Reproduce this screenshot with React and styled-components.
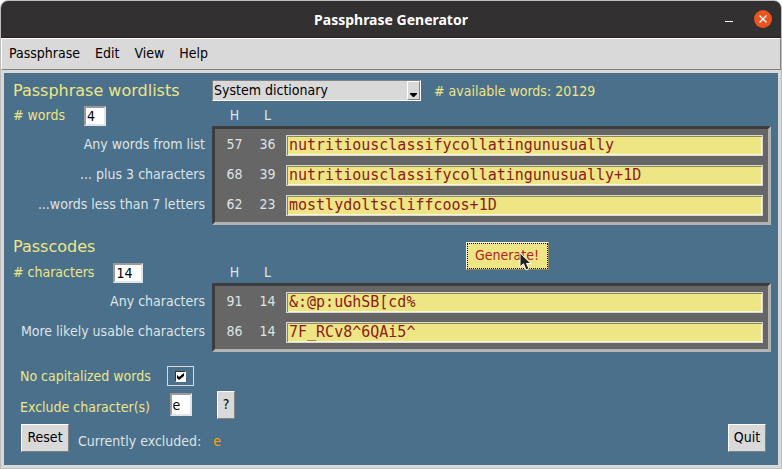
import React from "react";
import styled, { createGlobalStyle } from "styled-components";

const blue = "#4a708b";
const grey = "#d9d9d9";
const khaki = "#eee685";
const maroon = "#8b1a1a";

const GlobalStyle = createGlobalStyle`
  * { box-sizing: border-box; }
  body {
    margin: 0;
    background: #fff;
    font: 14px/20px "DejaVu Sans Condensed", "DejaVu Sans", sans-serif;
  }
  button, input, select { font: inherit; margin: 0; border-radius: 0; }
`;

const Window = styled.div`
  display: flex;
  flex-direction: column;
  min-height: 100vh;
  border: 1px solid #bdbdbb;
  border-radius: 8px 8px 0 0;
  background: ${grey};
  overflow: hidden;
`;

const TitleBar = styled.header`
  display: grid;
  grid-template-columns: 1fr auto 1fr;
  align-items: center;
  height: 37px;
  padding: 0 9px;
  background: #323030;
  border-bottom: 1px solid #222;
  color: #fff;
`;

const Title = styled.h1`
  grid-column: 2;
  margin: 0;
  padding-top: 2px;
  font: bold 14px/20px "Noto Sans", sans-serif;
`;

const WindowButtons = styled.div`
  display: flex;
  justify-content: flex-end;
  align-items: center;
  gap: 16px;
`;

const WindowButton = styled.button`
  display: flex;
  padding: 0;
  border: 0;
  background: none;
`;

const MenuBar = styled.nav`
  display: flex;
  align-items: center;
  gap: 15px;
  height: 32px;
  padding: 0 7px 2px;
  border: 1px solid;
  border-color: #fff #828282 #828282 #fff;
`;

const MenuItem = styled.button`
  padding: 0;
  border: 0;
  background: none;
  color: #000;
`;

const Body = styled.main`
  flex: 1;
  margin: 3px;
  padding-top: 7px;
  background: ${blue};
  color: #dfe3e5;
`;

const Section = styled.section`
  display: grid;
  grid-template-columns: 208px 1fr;
  padding-right: 7px;
`;

const Heading = styled.h2`
  margin: 0;
  padding-left: 9px;
  font: 16px/21px "DejaVu Sans", sans-serif;
  color: ${khaki};
`;

const SourceRow = styled.div`
  display: flex;
  align-items: center;
  gap: 13px;
  height: 21px;
`;

const SelectBox = styled.div`
  position: relative;
  width: 209px;
`;

const Select = styled.select`
  display: block;
  appearance: none;
  width: 100%;
  height: 21px;
  padding: 0 16px 0 1px;
  border: 1px solid;
  border-color: #828282 #fff #fff #828282;
  background: ${grey};
  color: #000;
  line-height: 17px;
`;

const SelectArrow = styled.span`
  position: absolute;
  top: 1px;
  right: 1px;
  display: flex;
  justify-content: center;
  align-items: flex-end;
  width: 13px;
  height: 19px;
  padding-bottom: 2px;
  border: 1px solid;
  border-color: #fff #828282 #828282 #fff;
  pointer-events: none;
`;

const Note = styled.span`
  color: ${khaki};
`;

const CountRow = styled.div`
  display: flex;
  align-items: flex-end;
  gap: 19px;
  height: 25px;
  padding-left: 9px;
`;

const OptionLabel = styled.label`
  padding-bottom: 1px;
  color: ${khaki};
`;

const CountInput = styled.input`
  width: ${(p) => p.$width}px;
  height: ${(p) => p.$height || 20}px;
  padding: 0 1px;
  border: 2px solid;
  border-color: #9a9a9a #e4e4e4 #e4e4e4 #9a9a9a;
  background: #fff;
  color: #000;
`;

const ColumnHeads = styled.div`
  display: grid;
  grid-template-columns: 33px 33px;
  align-self: end;
  padding: 0 0 1px 6px;
  text-align: center;
`;

const PasscodeTitle = styled.div`
  display: flex;
  flex-direction: column;
  justify-content: flex-end;
  gap: 1px;
`;

const PasscodeTools = styled.div`
  display: flex;
  align-items: flex-end;
  height: 58px;
`;

const GenerateButton = styled.button`
  position: relative;
  align-self: flex-start;
  width: 83px;
  height: 28px;
  margin: 17px 0 0 182px;
  padding: 0 1px 2px 0;
  border: 1px solid;
  border-color: #fbf8d0 #8f8a50 #8f8a50 #fbf8d0;
  outline: 1px dotted #000;
  outline-offset: -2px;
  background: ${khaki};
  color: #b22222;
`;

const Pointer = styled.svg`
  position: absolute;
  left: 52px;
  top: 9px;
`;

const Names = styled.div`
  display: flex;
  flex-direction: column;
  gap: 9px;
  padding: 8px 7px 0 0;
  text-align: right;
  line-height: 21px;
`;

const Panel = styled.div`
  display: grid;
  gap: 9px;
  padding: 6px 5px 6px 3px;
  border: 3px solid;
  border-color: #3d3d3d #b3b3b3 #b3b3b3 #3d3d3d;
  background: #666;
`;

const ResultRow = styled.div`
  display: grid;
  grid-template-columns: 33px 33px 1fr;
  height: 21px;
  line-height: 19px;
  text-align: center;
`;

const ResultInput = styled.input`
  min-width: 0;
  height: 21px;
  margin-left: 2px;
  padding: 0 2px 1px;
  border: 1px solid ${grey};
  box-shadow: inset 1px 1px #8f8a50, inset -1px -1px #fbf8d0;
  background: ${khaki};
  color: ${maroon};
  font: 15px/18px "DejaVu Sans Mono", monospace;
`;

const Options = styled.div`
  display: grid;
  grid-template-columns: 147px 27px auto;
  grid-template-rows: 20px 28px;
  row-gap: 5px;
  align-items: center;
  justify-content: start;
  padding: 14px 12px 5px 16px;
`;

const CheckFrame = styled.span`
  position: relative;
  grid-column: 2;
  display: flex;
  align-items: center;
  justify-content: center;
  height: 20px;
  border: 1px solid ${grey};
`;

const CheckBox = styled.input`
  appearance: none;
  width: 11px;
  height: 11px;
  border: 1px solid;
  border-color: #333 #fff #fff #333;
  background: #fff;
`;

const CheckMark = styled.svg`
  position: absolute;
  pointer-events: none;
`;

const ExcludeLabel = styled(OptionLabel)`
  grid-column: 1;
  padding: 4px 0 0;
`;

const ExcludeCell = styled.span`
  display: flex;
  align-self: start;
  justify-content: center;
  padding-top: 2px;
`;

const Button = styled.button`
  width: ${(p) => p.$width}px;
  height: 28px;
  padding: 0 0 2px;
  border: 1px solid;
  border-color: #fff #828282 #828282 #fff;
  background: ${grey};
  color: #000;
`;

const HelpCell = styled.span`
  display: flex;
  padding-left: 23px;
`;

const Footer = styled.footer`
  display: flex;
  align-items: center;
  gap: 9px;
  padding: 0 12px 12px 17px;
`;

const Excluded = styled.span`
  flex: 1;
  padding-top: 6px;
`;

const ExcludedValue = styled.output`
  margin-left: 8px;
  color: #ffa500;
`;

const words = [
  { id: "any-words", name: "Any words from list", h: 57, l: 36, value: "nutritiousclassifycollatingunusually" },
  { id: "plus-three", name: "... plus 3 characters", h: 68, l: 39, value: "nutritiousclassifycollatingunusually+1D" },
  { id: "short-words", name: "...words less than 7 letters", h: 62, l: 23, value: "mostlydoltscliffcoos+1D" },
];

const codes = [
  { id: "any-chars", name: "Any characters", h: 91, l: 14, value: "&:@p:uGhSB[cd%" },
  { id: "usable-chars", name: "More likely usable characters", h: 86, l: 14, value: "7F_RCv8^6QAi5^" },
];

function Heads() {
  return (
    <ColumnHeads>
      <span>H</span>
      <span>L</span>
    </ColumnHeads>
  );
}

function Results({ rows }) {
  return (
    <>
      <Names>
        {rows.map((r) => (
          <label key={r.id} htmlFor={r.id}>{r.name}</label>
        ))}
      </Names>
      <Panel>
        {rows.map((r) => (
          <ResultRow key={r.id}>
            <span>{r.h}</span>
            <span>{r.l}</span>
            <ResultInput id={r.id} defaultValue={r.value} spellCheck={false} />
          </ResultRow>
        ))}
      </Panel>
    </>
  );
}

export default function App() {
  return (
    <>
      <GlobalStyle />
      <Window>
        <TitleBar>
          <Title>Passphrase Generator</Title>
          <WindowButtons>
            <WindowButton aria-label="Minimize">
              <svg width="18" height="18" viewBox="0 0 18 18">
                <path d="M5 11.5h8" stroke="#fff" />
              </svg>
            </WindowButton>
            <WindowButton aria-label="Close">
              <svg width="18" height="18" viewBox="0 0 18 18">
                <circle cx="9" cy="9" r="9" fill="#e95420" />
                <path d="M5.5 5.5l7 7M12.5 5.5l-7 7" stroke="#fff" strokeWidth="1.3" />
              </svg>
            </WindowButton>
          </WindowButtons>
        </TitleBar>
        <MenuBar>
          {["Passphrase", "Edit", "View", "Help"].map((m) => (
            <MenuItem key={m}>{m}</MenuItem>
          ))}
        </MenuBar>
        <Body>
          <Section>
            <Heading>Passphrase wordlists</Heading>
            <SourceRow>
              <SelectBox>
                <Select aria-label="Wordlist">
                  <option>System dictionary</option>
                </Select>
                <SelectArrow>
                  <svg width="7" height="4" viewBox="0 0 7 4">
                    <path d="M0 0h7v1L4 4H3L0 1z" fill="#000" />
                  </svg>
                </SelectArrow>
              </SelectBox>
              <Note># available words: 20129</Note>
            </SourceRow>
            <CountRow>
              <OptionLabel htmlFor="num-words"># words</OptionLabel>
              <CountInput id="num-words" $width={22} defaultValue="4" />
            </CountRow>
            <Heads />
            <Results rows={words} />
          </Section>
          <Section>
            <PasscodeTitle>
              <Heading>Passcodes</Heading>
              <CountRow>
                <OptionLabel htmlFor="num-chars"># characters</OptionLabel>
                <CountInput id="num-chars" $width={30} defaultValue="14" />
              </CountRow>
            </PasscodeTitle>
            <PasscodeTools>
              <Heads />
              <GenerateButton>
                Generate!
                <Pointer width="14" height="20" viewBox="0 0 14 20">
                  <path
                    d="M1 1v14l3.500-3.200L7 18l3-1.300-2.500-5.200H12z"
                    fill="#222"
                    stroke="#fff"
                  />
                </Pointer>
              </GenerateButton>
            </PasscodeTools>
            <Results rows={codes} />
          </Section>
          <Options>
            <OptionLabel htmlFor="no-caps">No capitalized words</OptionLabel>
            <CheckFrame>
              <CheckBox id="no-caps" type="checkbox" defaultChecked />
              <CheckMark width="7" height="7" viewBox="0 0 7 7">
                <path d="M0 2l2 2 5-4v3L2 7 0 5z" fill="#000" />
              </CheckMark>
            </CheckFrame>
            <ExcludeLabel htmlFor="exclude">Exclude character(s)</ExcludeLabel>
            <ExcludeCell>
              <CountInput id="exclude" $width={22} $height={23} defaultValue="e" />
            </ExcludeCell>
            <HelpCell>
              <Button $width={18}>?</Button>
            </HelpCell>
          </Options>
          <Footer>
            <Button $width={48}>Reset</Button>
            <Excluded>
              Currently excluded: <ExcludedValue>e</ExcludedValue>
            </Excluded>
            <Button $width={38}>Quit</Button>
          </Footer>
        </Body>
      </Window>
    </>
  );
}
